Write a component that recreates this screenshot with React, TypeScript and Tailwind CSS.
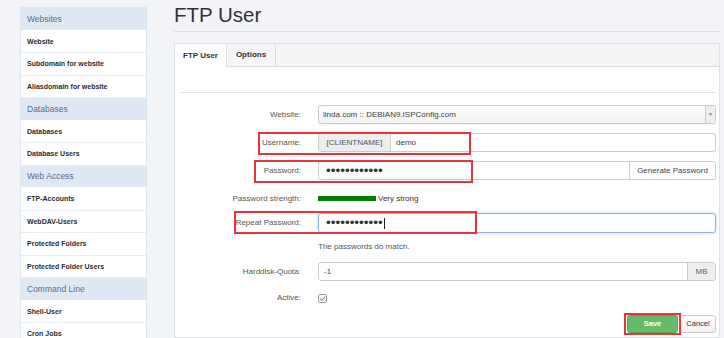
import { ReactNode } from 'react'

const sidebar: { title: string; items: string[] }[] = [
  { title: 'Websites', items: ['Website', 'Subdomain for website', 'Aliasdomain for website'] },
  { title: 'Databases', items: ['Databases', 'Database Users'] },
  { title: 'Web Access', items: ['FTP-Accounts', 'WebDAV-Users', 'Protected Folders', 'Protected Folder Users'] },
  { title: 'Command Line', items: ['Shell-User', 'Cron Jobs'] },
]

function Row({ label, className, children }: { label: string; className?: string; children: ReactNode }) {
  return (
    <div className={`flex items-center ${className ?? ''}`}>
      <div className="w-[121px] shrink-0 text-right text-[8px] text-[#555]">{label}</div>
      <div className="ml-[17px] flex-1 flex items-center">{children}</div>
    </div>
  )
}

const dots = '••••••••••••'

export default function App() {
  return (
    <div className="relative w-[724px] h-[338px] overflow-hidden bg-[#f2f4f7] flex font-['Liberation_Sans',Arial,sans-serif]">
      {/* Sidebar */}
      <aside className="ml-[20px] mt-[7px] w-[127px] self-start bg-white border border-[#dfe6ee]">
        {sidebar.map((group) => (
          <div key={group.title}>
            <div className="h-[22.5px] flex items-center pl-[6px] pt-px bg-[#dfe9f5] text-[8.5px] text-[#5b6f88] border-b border-white">
              {group.title}
            </div>
            {group.items.map((item) => (
              <div
                key={item}
                className="h-[22.5px] flex items-center pl-[6px] pt-px border-b border-[#e6edf5] text-[7px] font-bold text-[#2c2c2c]"
              >
                {item}
              </div>
            ))}
          </div>
        ))}
      </aside>

      {/* Main */}
      <main className="ml-[27px] mr-[4px] flex-1 flex flex-col">
        <div className="h-[32px] pt-[3px] border-b border-[#dde1e5]">
          <h1 className="text-[20.5px] leading-[24px] text-[#333]">FTP User</h1>
        </div>

        <div className="mt-[11px] flex-1 bg-white border border-[#dde2e7]">
          {/* Tabs */}
          <div className="h-[23px] flex bg-[#f5f5f5] border-b border-[#dddddd]">
            <div className="w-[52px] -mb-px bg-white border-r border-[#dddddd] flex items-center justify-center text-[8px] font-bold text-[#333]">
              FTP User
            </div>
            <div className="w-[49px] border-r border-[#dddddd] flex items-center justify-center text-[8px] font-bold text-[#333]">
              Options
            </div>
          </div>

          <div className="pl-[5px] pr-[3px]">
            <div className="mt-[25px] border-t border-[#e3e3e3]" />

            <Row label="Website:" className="mt-[12px] h-[19px]">
              <div className="flex-1 h-[19px] flex items-stretch rounded-[3px] border border-[#cccccc] bg-gradient-to-b from-white to-[#f1f1f1] shadow-[0_1px_1px_rgba(0,0,0,0.06)]">
                <div className="flex-1 flex items-center pl-[4px] text-[8px] text-[#444]">
                  linda.com :: DEBIAN9.ISPConfig.com
                </div>
                <div className="w-[10px] border-l border-[#cccccc] bg-[#eeeeee] flex items-center justify-center text-[5px] text-[#888]">
                  ▼
                </div>
              </div>
            </Row>

            <Row label="Username:" className="mt-[9px] h-[19px]">
              <div className="flex-1 h-[19px] flex items-stretch rounded-[3px] border border-[#cccccc] overflow-hidden">
                <div className="w-[72px] bg-[#eeeeee] border-r border-[#cccccc] flex items-center justify-center text-[8px] text-[#555]">
                  [CLIENTNAME]
                </div>
                <div className="flex-1 flex items-center pl-[5px] text-[8px] text-[#444]">demo</div>
              </div>
            </Row>

            <Row label="Password:" className="mt-[9px] h-[19px]">
              <div className="flex-1 h-[19px] flex items-stretch rounded-[3px] border border-[#cccccc] overflow-hidden">
                <div className="flex-1 flex items-center pl-[7px] text-[13.5px] leading-none text-[#333]">{dots}</div>
                <div className="w-[86px] border-l border-[#cccccc] bg-white flex items-center justify-center text-[8px] text-[#444]">
                  Generate Password
                </div>
              </div>
            </Row>

            <Row label="Password strength:" className="mt-[9px] h-[19px]">
              <div className="w-[58px] h-[5px] bg-[#008000]" />
              <span className="ml-[2px] text-[8px] text-[#333]">Very strong</span>
            </Row>

            <Row label="Repeat Password:" className="mt-[5px] h-[20px]">
              <div className="flex-1 h-[20px] flex items-center rounded-[3px] border border-[#8fb8dc] shadow-[0_0_3px_rgba(102,175,233,0.6)] pl-[7px]">
                <span className="text-[13.5px] leading-none text-[#333]">{dots}</span>
                <span className="ml-px w-px h-[11px] bg-[#222]" />
              </div>
            </Row>

            <Row label="" className="mt-[5px] h-[18px]">
              <span className="text-[8px] text-[#555]">The passwords do match.</span>
            </Row>

            <Row label="Harddisk-Quota:" className="mt-[6px] h-[19px]">
              <div className="flex-1 h-[19px] flex items-stretch rounded-[3px] border border-[#cccccc] overflow-hidden">
                <div className="flex-1 flex items-center pl-[5px] text-[8px] text-[#444]">-1</div>
                <div className="w-[28px] bg-[#eeeeee] border-l border-[#cccccc] flex items-center justify-center text-[8px] text-[#666]">
                  MB
                </div>
              </div>
            </Row>

            <Row label="Active:" className="mt-[8px] h-[18px]">
              <svg width="9" height="9" viewBox="0 0 9 9">
                <rect x="0.5" y="0.5" width="8" height="8" rx="1" fill="#f3f3f3" stroke="#9a9a9a" />
                <path d="M2 4.6 L3.8 6.3 L7 2.6" fill="none" stroke="#777" strokeWidth="1" />
              </svg>
            </Row>

            <div className="mt-[8px] flex justify-end gap-[2px]">
              <button className="w-[51px] h-[18px] rounded-[3px] bg-[#66bb6a] border border-[#4cae4c] text-[7.5px] font-bold text-white">
                Save
              </button>
              <button className="w-[36px] h-[18px] rounded-[3px] bg-gradient-to-b from-white to-[#f0f0f0] border border-[#cccccc] text-[7.5px] text-[#333]">
                Cancel
              </button>
            </div>
          </div>
        </div>
      </main>

      {/* Red annotation boxes */}
      <div className="absolute left-[258px] top-[132px] w-[213px] h-[23px] border-2 border-[#e8343a]" />
      <div className="absolute left-[254px] top-[160px] w-[219px] h-[23px] border-2 border-[#e8343a]" />
      <div className="absolute left-[234px] top-[211px] w-[243px] h-[23px] border-2 border-[#e8343a]" />
      <div className="absolute left-[624px] top-[313px] w-[57px] h-[22px] border-2 border-[#e8343a]" />
    </div>
  )
}
